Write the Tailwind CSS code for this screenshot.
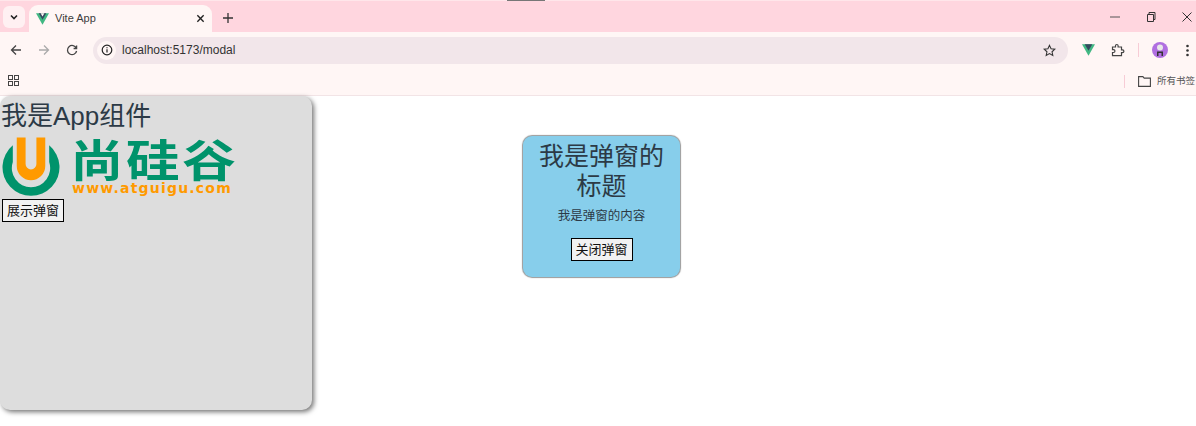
<!DOCTYPE html>
<html lang="en">
<head>
    <meta charset="UTF-8">
    <title>Vite App</title>
    <script src="https://cdn.jsdelivr.net/npm/@tailwindcss/browser@4"></script>
</head>
<body class="w-[1196px] h-[426px] overflow-hidden bg-white font-['Liberation_Sans','Noto_Sans_CJK_SC',sans-serif] text-[#2c3a46]">
    <!-- Tab strip -->
    <div class="h-8 bg-[#ffd6df] border-t border-[#ffe6ea] flex items-end pl-[3px] relative">
        <div class="absolute left-[507px] top-[-1px] w-[38px] h-px bg-[#777]"></div>
        <div class="w-[22px] h-[22px] mb-[4px] rounded-md bg-[#fff0f2] flex items-center justify-center">
            <svg width="10" height="10" viewBox="0 0 10 10" fill="none" stroke="#222" stroke-width="1.6"><path d="M2 3.500 5 6.500 8 3.500"/></svg>
        </div>
        <div class="w-[183px] h-[27px] ml-[4px] bg-[#fff6f5] rounded-t-[9px] flex items-center pl-[7px] pr-[7px]">
            <svg width="13" height="12" viewBox="0 0 24 21"><path d="M0 0h24L12 21z" fill="#41b883"/><path d="M5 0h14l-7 12z" fill="#35495e"/><path d="M8.500 0h7L12 6z" fill="#fff6f5"/></svg>
            <span class="ml-[6px] text-[11px] text-[#3c3c3c]">Vite App</span>
            <svg class="ml-auto" width="9" height="9" viewBox="0 0 10 10" stroke="#222" stroke-width="1.5"><path d="M1.500 1.500 8.500 8.500M8.500 1.500 1.500 8.500"/></svg>
        </div>
        <svg class="ml-[11px] mb-[9px]" width="10" height="10" viewBox="0 0 10 10" stroke="#333" stroke-width="1.300"><path d="M5 0v10M0 5h10"/></svg>
        <div class="ml-auto flex items-center mb-[10px] pr-[4px] gap-[26px]">
            <svg width="10" height="10" viewBox="0 0 10 10" stroke="#555" stroke-width="1"><path d="M0 5h10"/></svg>
            <svg width="10" height="10" viewBox="0 0 10 10" fill="none" stroke="#333" stroke-width="1"><path d="M1.500 2.500h6v7h-6zM3 2.500V.5h6v7H7.500"/></svg>
            <svg width="10" height="10" viewBox="0 0 10 10" stroke="#333" stroke-width="1"><path d="M.5.5l9 9M9.500.5l-9 9"/></svg>
        </div>
    </div>

    <!-- Address bar -->
    <div class="h-[36px] bg-[#fff6f5] flex items-center pl-[10px]">
        <svg width="12" height="12" viewBox="0 0 12 12" fill="none" stroke="#444" stroke-width="1.300"><path d="M11 6H1.500M6 1.500 1.500 6 6 10.500"/></svg>
        <svg class="ml-[16px]" width="12" height="12" viewBox="0 0 12 12" fill="none" stroke="#aaa" stroke-width="1.300"><path d="M1 6h9.500M6 1.500 10.500 6 6 10.500"/></svg>
        <svg class="ml-[16px]" width="12" height="12" viewBox="0 0 12 12" fill="none" stroke="#444" stroke-width="1.300"><path d="M10.300 4.200A4.600 4.600 0 1 0 10.600 7M10.600 1.500v3H7.600"/></svg>
        <div class="ml-[15px] w-[975px] h-[27px] rounded-full bg-[#f2e6ea] flex items-center pl-[4px] pr-[12px]">
            <div class="w-[19px] h-[19px] rounded-full bg-[#fff6f5] flex items-center justify-center">
                <svg width="12" height="12" viewBox="0 0 12 12" fill="none" stroke="#222" stroke-width="1.200"><circle cx="6" cy="6" r="4.800"/><path d="M6 5.300v3.200M6 3.200v1.100"/></svg>
            </div>
            <span class="ml-[6px] text-[12px] text-[#333]">localhost:5173/modal</span>
            <svg class="ml-auto" width="13" height="13" viewBox="0 0 24 24" fill="none" stroke="#333" stroke-width="2"><path d="M12 2.500l2.900 6.300 6.900.8-5.100 4.700 1.400 6.800-6.100-3.400-6.100 3.400 1.400-6.800L2.200 9.600l6.900-.8z"/></svg>
        </div>
        <svg class="ml-[14px]" width="13" height="12" viewBox="0 0 24 21"><path d="M0 0h24L12 21z" fill="#41b883"/><path d="M5 0h14l-7 12z" fill="#35495e"/></svg>
        <svg class="ml-[16px]" width="14" height="14" viewBox="0 0 14 14" fill="none" stroke="#444" stroke-width="1.200"><path d="M1.500 4h3V2.800a1.300 1.300 0 0 1 2.600 0V4h3.400v2.800h1a1.400 1.400 0 0 1 0 2.800h-1v3H1.500V9.500h1a1.400 1.400 0 0 0 0-2.900h-1z"/></svg>
        <div class="ml-[13px] w-px h-[14px] bg-[#f7ccd6]"></div>
        <div class="ml-[13px] w-4 h-4 rounded-full bg-[#b06fe0] flex items-center justify-center">
            <svg width="10" height="12" viewBox="0 0 10 12"><circle cx="5" cy="3.500" r="3" fill="#e8e8e8"/><path d="M2 12V7.500h6V12H6.500V9h-3v3z" fill="#333"/></svg>
        </div>
        <svg class="ml-[18px]" width="3" height="13" viewBox="0 0 3 13" fill="#333"><circle cx="1.500" cy="2" r="1.300"/><circle cx="1.500" cy="6.500" r="1.300"/><circle cx="1.500" cy="11" r="1.300"/></svg>
    </div>

    <!-- Bookmarks bar -->
    <div class="h-[28px] bg-[#fff6f5] border-b border-[#f2e4e6] flex items-center pl-[8px]">
        <svg class="mb-[3px]" width="11" height="11" viewBox="0 0 11 11" fill="none" stroke="#444" stroke-width="1"><rect x=".5" y=".5" width="4" height="4"/><rect x="6.500" y=".5" width="4" height="4"/><rect x=".5" y="6.500" width="4" height="4"/><rect x="6.500" y="6.500" width="4" height="4"/></svg>
        <div class="ml-auto w-px h-[13px] bg-[#f7ccd6]"></div>
        <svg class="ml-[13px]" width="13" height="11" viewBox="0 0 13 11" fill="none" stroke="#444" stroke-width="1.100"><path d="M.6.600h4.300l1.300 1.500h6.200v8.300H.6z"/></svg>
        <span class="ml-[6px] w-[39px] overflow-hidden whitespace-nowrap text-[9.500px] text-[#555]">所有书签</span>
    </div>

    <!-- Page -->
    <div class="relative h-[330px]">
        <div class="w-[312px] h-[314px] bg-[#dddddd] rounded-[10px] shadow-[2px_2px_5px_rgba(0,0,0,0.55)] pl-[2px]">
            <h2 class="-ml-px text-[26px] leading-[40px] h-[40px] font-normal whitespace-nowrap">我是App组件</h2>
            <!-- logo -->
            <div class="flex h-[63px] w-[240px]">
                <svg class="shrink-0" width="58" height="60" viewBox="0 0 59 60">
                    <path d="M11 9A29 29 0 1 0 48 9V26A19.500 19.500 0 1 1 11 26z" fill="#00936b"/>
                    <path d="M15 1H24V28a5.500 5.500 0 0 0 11 0V1H44V30a14.500 14.500 0 0 1-29 0z" fill="#ff9a00"/>
                </svg>
                <div class="ml-[10px] flex flex-col items-start">
                    <span class="origin-left scale-x-[1.22] text-[#00936b] font-bold text-[44px] leading-[44px] tracking-[2px] whitespace-nowrap font-['Noto_Sans_CJK_SC',sans-serif]">尚硅谷</span>
                    <span class="ml-[2px] text-[#ff9a00] font-bold text-[14px] leading-[16px] tracking-[1.200px] whitespace-nowrap font-['DejaVu_Sans',sans-serif]">www.atguigu.com</span>
                </div>
            </div>
            <button class="block h-[23px] w-[62px] border border-black bg-[#f2f2f2] text-[13px] text-[#111] whitespace-nowrap">展示弹窗</button>
        </div>

        <!-- Modal -->
        <div class="absolute left-[523px] top-[40px] w-[157px] h-[141px] rounded-[9px] bg-[#87ceeb] shadow-[0_0_1px_1px_rgba(0,0,0,0.4)] flex flex-col items-center text-center px-[8px]">
            <h2 class="text-[25px] leading-[30px] pt-[5px] font-normal">我是弹窗的标题</h2>
            <p class="mt-[7px] text-[12.500px] leading-[16px]">我是弹窗的内容</p>
            <button class="mt-[14px] h-[23px] w-[62px] border border-black bg-[#f2f2f2] text-[13px] text-[#111] whitespace-nowrap">关闭弹窗</button>
        </div>
    </div>
</body>
</html>
